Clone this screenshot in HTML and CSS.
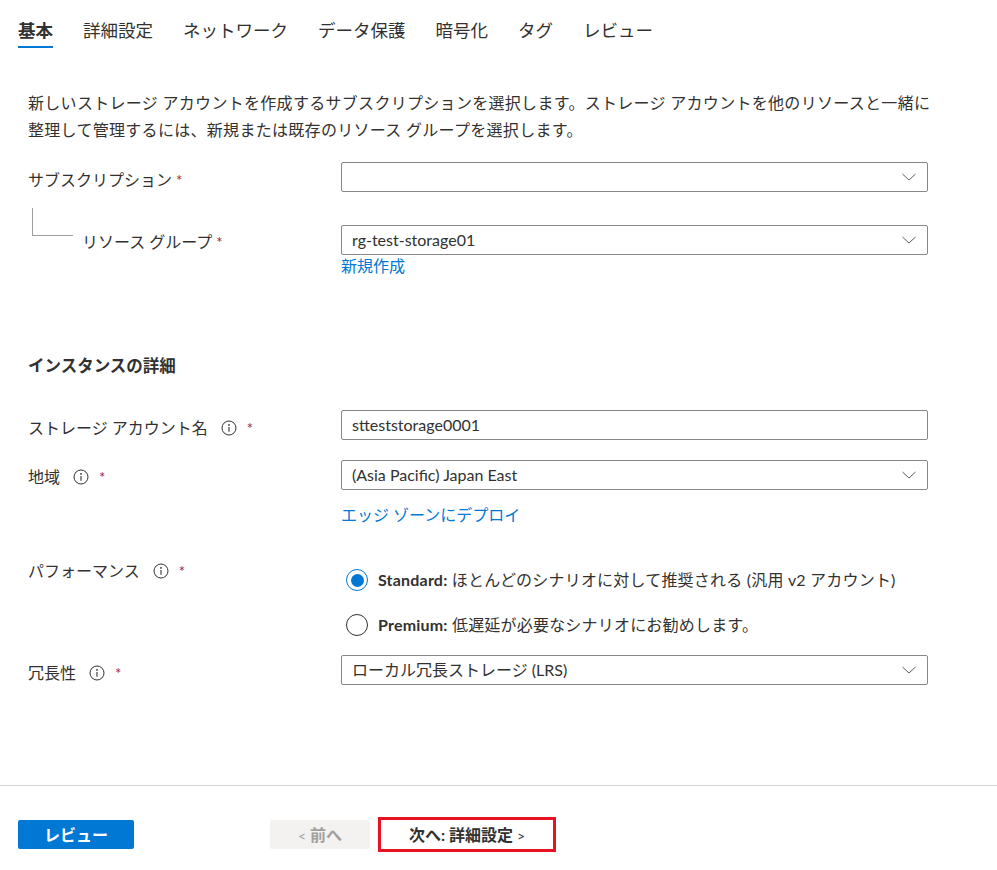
FILE: index.html
```html
<!DOCTYPE html>
<html lang="ja">
<head>
<meta charset="utf-8">
<title>ストレージ アカウントの作成</title>
<link rel="stylesheet" href="styles.css">
</head>
<body>
<nav class="tabs">
  <span class="tab active">基本</span>
  <span class="tab">詳細設定</span>
  <span class="tab">ネットワーク</span>
  <span class="tab">データ保護</span>
  <span class="tab">暗号化</span>
  <span class="tab">タグ</span>
  <span class="tab">レビュー</span>
</nav>

<main class="content">
  <p class="intro">新しいストレージ アカウントを作成するサブスクリプションを選択します。ストレージ アカウントを他のリソースと一緒に<br>整理して管理するには、新規または既存のリソース グループを選択します。</p>

  <div class="row row-sub">
    <div class="label">サブスクリプション <span class="req">*</span></div>
    <div class="control">
      <div class="select"><span class="value"></span>
        <svg class="chev" width="16" height="16" viewBox="0 0 16 16"><polyline points="1.5,5 8,11 14.5,5" fill="none" stroke="#605e5c" stroke-width="1"/></svg>
      </div>
    </div>
  </div>

  <div class="row row-rg">
    <div class="label label-tree">
      <span class="tree"></span>
      <span class="tree-text">リソース グループ <span class="req">*</span></span>
    </div>
    <div class="control">
      <div class="select"><span class="value">rg-test-storage01</span>
        <svg class="chev" width="16" height="16" viewBox="0 0 16 16"><polyline points="1.5,5 8,11 14.5,5" fill="none" stroke="#605e5c" stroke-width="1"/></svg>
      </div>
      <a class="link link-new">新規作成</a>
    </div>
  </div>

  <h2 class="section">インスタンスの詳細</h2>

  <div class="row row-name">
    <div class="label">ストレージ アカウント名
      <svg class="info" width="16" height="16" viewBox="0 0 16 16"><circle cx="8" cy="8" r="7" fill="none" stroke="#323130" stroke-width="1"/><circle cx="8" cy="4.9" r="0.9" fill="#323130"/><line x1="8" y1="7" x2="8" y2="11.8" stroke="#323130" stroke-width="1.1"/></svg>
      <span class="req req-i">*</span></div>
    <div class="control">
      <div class="input"><span class="value">stteststorage0001</span></div>
    </div>
  </div>

  <div class="row row-region">
    <div class="label">地域
      <svg class="info" width="16" height="16" viewBox="0 0 16 16"><circle cx="8" cy="8" r="7" fill="none" stroke="#323130" stroke-width="1"/><circle cx="8" cy="4.9" r="0.9" fill="#323130"/><line x1="8" y1="7" x2="8" y2="11.8" stroke="#323130" stroke-width="1.1"/></svg>
      <span class="req req-i">*</span></div>
    <div class="control">
      <div class="select"><span class="value">(Asia Pacific) Japan East</span>
        <svg class="chev" width="16" height="16" viewBox="0 0 16 16"><polyline points="1.5,5 8,11 14.5,5" fill="none" stroke="#605e5c" stroke-width="1"/></svg>
      </div>
      <a class="link link-edge">エッジ ゾーンにデプロイ</a>
    </div>
  </div>

  <div class="row row-perf">
    <div class="label">パフォーマンス
      <svg class="info" width="16" height="16" viewBox="0 0 16 16"><circle cx="8" cy="8" r="7" fill="none" stroke="#323130" stroke-width="1"/><circle cx="8" cy="4.9" r="0.9" fill="#323130"/><line x1="8" y1="7" x2="8" y2="11.8" stroke="#323130" stroke-width="1.1"/></svg>
      <span class="req req-i">*</span></div>
    <div class="control radios">
      <div class="radio-item"><span class="radio checked"></span><span class="radio-text"><b>Standard:</b> ほとんどのシナリオに対して推奨される (汎用 v2 アカウント)</span></div>
      <div class="radio-item"><span class="radio"></span><span class="radio-text"><b>Premium:</b> 低遅延が必要なシナリオにお勧めします。</span></div>
    </div>
  </div>

  <div class="row row-red">
    <div class="label">冗長性
      <svg class="info" width="16" height="16" viewBox="0 0 16 16"><circle cx="8" cy="8" r="7" fill="none" stroke="#323130" stroke-width="1"/><circle cx="8" cy="4.9" r="0.9" fill="#323130"/><line x1="8" y1="7" x2="8" y2="11.8" stroke="#323130" stroke-width="1.1"/></svg>
      <span class="req req-i">*</span></div>
    <div class="control">
      <div class="select"><span class="value">ローカル冗長ストレージ (LRS)</span>
        <svg class="chev" width="16" height="16" viewBox="0 0 16 16"><polyline points="1.5,5 8,11 14.5,5" fill="none" stroke="#605e5c" stroke-width="1"/></svg>
      </div>
    </div>
  </div>
</main>

<footer class="footer">
  <button class="btn btn-primary">レビュー</button>
  <button class="btn btn-prev"><span class="arrow">&lt;</span> 前へ</button>
  <div class="highlight">
    <button class="btn btn-next">次へ: 詳細設定 <span class="arrow">&gt;</span></button>
  </div>
</footer>
</body>
</html>
```
FILE: styles.css
```css
* { box-sizing: border-box; }

html, body {
  margin: 0;
  padding: 0;
  background: #ffffff;
}

body {
  font-family: "Lato", "Noto Sans CJK JP", sans-serif;
  font-size: 16px;
  color: #323130;
  width: 997px;
}

/* Tabs */
.tabs {
  display: flex;
  gap: 30px;
  padding: 19px 0 0 18px;
}

.tab {
  font-size: 17.5px;
  line-height: 24px;
  padding-bottom: 3px;
  border-bottom: 2px solid transparent;
  color: #323130;
}

.tab.active {
  font-weight: 700;
  border-bottom-color: #0078d4;
}

/* Content */
.content {
  padding-left: 28px;
}

.intro {
  margin: 41px 0 0 0;
  line-height: 27px;
  max-width: 940px;
  letter-spacing: 0.3px;
}

.row {
  display: flex;
  align-items: flex-start;
}

.label {
  width: 313px;
  flex: none;
  line-height: 24px;
  display: flex;
  align-items: center;
  white-space: nowrap;
}

.control {
  width: 587px;
  flex: none;
  display: flex;
  flex-direction: column;
}

.req {
  color: #a4262c;
  margin-left: 4px;
  font-size: 15px;
}

.req-i {
  margin-left: 10px;
}

.info {
  margin-left: 13px;
  flex: none;
}

.select, .input {
  height: 30px;
  border: 1px solid #8a8886;
  border-radius: 2px;
  display: flex;
  align-items: center;
  padding: 0 10px 0 10px;
  background: #fff;
}

.value {
  flex: 1;
  line-height: 24px;
  white-space: nowrap;
}

.chev {
  flex: none;
}

.link {
  color: #0078d4;
  line-height: 22px;
  cursor: pointer;
}

/* Row specific spacing */
.row-sub { margin-top: 19px; }
.row-sub .label { padding-top: 6px; }

.row-rg { margin-top: 33px; }
.label-tree {
  align-items: flex-start;
}
.tree {
  display: block;
  width: 41px;
  height: 28px;
  margin: -17px 0 0 4px;
  border-left: 1px solid #a19f9d;
  border-bottom: 1px solid #a19f9d;
  flex: none;
}
.tree-text {
  margin: 5px 0 0 9px;
  display: flex;
  align-items: center;
}

.section {
  margin: 77px 0 0 0;
  font-size: 16.5px;
  line-height: 24px;
  font-weight: 700;
}

.row-name { margin-top: 32px; }
.row-name .label { padding-top: 6px; }

.row-region { margin-top: 20px; }
.row-region .label { padding-top: 5px; }
.link-edge { margin-top: 14px; }

.row-perf { margin-top: 33px; }

.radios {
  padding-top: 9px;
  gap: 21px;
}

.radio-item {
  display: flex;
  align-items: center;
  height: 24px;
  padding-left: 5px;
}

.radio {
  width: 22px;
  height: 22px;
  border-radius: 50%;
  border: 1px solid #323130;
  flex: none;
  display: flex;
  align-items: center;
  justify-content: center;
  background: #fff;
}

.radio.checked {
  border-color: #0078d4;
}

.radio.checked::after {
  content: "";
  width: 13px;
  height: 13px;
  border-radius: 50%;
  background: #0078d4;
}

.radio-text {
  margin-left: 10px;
  line-height: 24px;
  white-space: nowrap;
  letter-spacing: 0.2px;
}

.radio-text b {
  font-weight: 700;
}

.row-red { margin-top: 18px; }
.row-red .label { padding-top: 6px; }

/* Footer */
.footer {
  margin-top: 100px;
  border-top: 1px solid #d6d6d6;
  padding: 31px 0 0 18px;
  display: flex;
  align-items: center;
}

.btn {
  font-family: inherit;
  font-size: 16px;
  font-weight: 700;
  height: 29px;
  border: none;
  border-radius: 2px;
  padding: 0;
  line-height: 29px;
  cursor: pointer;
}

.btn-primary {
  width: 116px;
  background: #0078d4;
  color: #ffffff;
}

.btn-prev {
  width: 100px;
  margin-left: 136px;
  background: #f3f2f1;
  color: #a19f9d;
}

.arrow {
  font-weight: 400;
  font-size: 14px;
}

.highlight {
  margin-left: 8px;
  width: 178px;
  height: 35px;
  border: 3px solid #e81123;
  display: flex;
  align-items: center;
  justify-content: center;
}

.btn-next {
  background: #ffffff;
  color: #323130;
  width: 100%;
}
```
